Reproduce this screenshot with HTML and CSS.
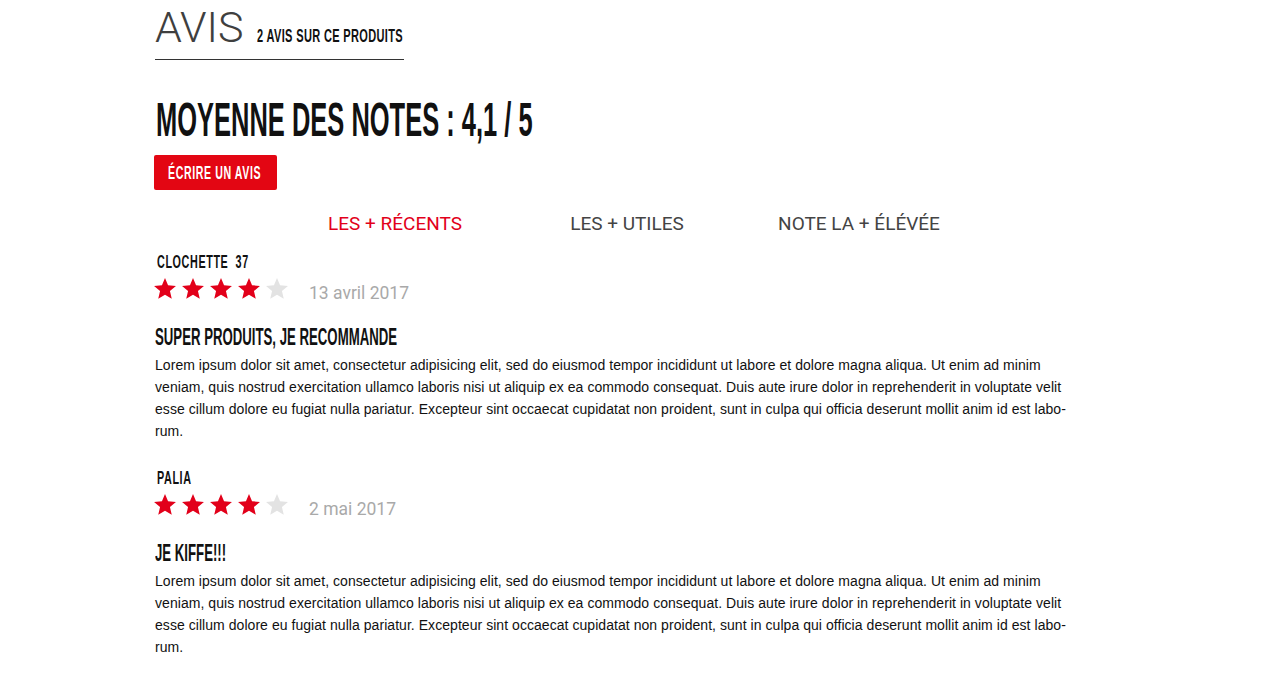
FILE: index.html
```html
<!DOCTYPE html>
<html lang="fr">
<head>
<meta charset="utf-8">
<title>Avis</title>
<link rel="stylesheet" href="styles.css">
</head>
<body>
<div class="page">
  <header class="reviews-head">
    <h1 class="reviews-title">AVIS</h1>
    <span class="reviews-count"><span class="cond">2 AVIS SUR CE PRODUITS</span></span>
  </header>

  <h2 class="average">MOYENNE DES NOTES : 4,1 / 5</h2>

  <button class="write-btn" type="button"><span class="cond">ÉCRIRE UN AVIS</span></button>

  <nav class="sort-tabs">
    <a class="tab active">LES + RÉCENTS</a>
    <a class="tab">LES + UTILES</a>
    <a class="tab">NOTE LA + ÉLÉVÉE</a>
  </nav>

  <article class="review">
    <div class="author">CLOCHETTE&nbsp; 37</div>
    <div class="rating-row">
      <span class="stars">
        <svg class="star on" viewBox="1 0.5 22 21"><polygon points="12,0.5 15.06,7.79 22.94,8.45 16.95,13.61 18.76,21.3 12,17.2 5.24,21.3 7.05,13.61 1.06,8.45 8.94,7.79"/></svg>
        <svg class="star on" viewBox="1 0.5 22 21"><polygon points="12,0.5 15.06,7.79 22.94,8.45 16.95,13.61 18.76,21.3 12,17.2 5.24,21.3 7.05,13.61 1.06,8.45 8.94,7.79"/></svg>
        <svg class="star on" viewBox="1 0.5 22 21"><polygon points="12,0.5 15.06,7.79 22.94,8.45 16.95,13.61 18.76,21.3 12,17.2 5.24,21.3 7.05,13.61 1.06,8.45 8.94,7.79"/></svg>
        <svg class="star on" viewBox="1 0.5 22 21"><polygon points="12,0.5 15.06,7.79 22.94,8.45 16.95,13.61 18.76,21.3 12,17.2 5.24,21.3 7.05,13.61 1.06,8.45 8.94,7.79"/></svg>
        <svg class="star off" viewBox="1 0.5 22 21"><polygon points="12,0.5 15.06,7.79 22.94,8.45 16.95,13.61 18.76,21.3 12,17.2 5.24,21.3 7.05,13.61 1.06,8.45 8.94,7.79"/></svg>
      </span>
      <span class="date">13 avril 2017</span>
    </div>
    <h3 class="review-title">SUPER PRODUITS, JE RECOMMANDE</h3>
    <p class="review-text">Lorem ipsum dolor sit amet, consectetur adipisicing elit, sed do eiusmod tempor incididunt ut labore et dolore magna aliqua. Ut enim ad minim<br>veniam, quis nostrud exercitation ullamco laboris nisi ut aliquip ex ea commodo consequat. Duis aute irure dolor in reprehenderit in voluptate velit<br>esse cillum dolore eu fugiat nulla pariatur. Excepteur sint occaecat cupidatat non proident, sunt in culpa qui officia deserunt mollit anim id est labo-<br>rum.</p>
  </article>

  <article class="review">
    <div class="author">PALIA</div>
    <div class="rating-row">
      <span class="stars">
        <svg class="star on" viewBox="1 0.5 22 21"><polygon points="12,0.5 15.06,7.79 22.94,8.45 16.95,13.61 18.76,21.3 12,17.2 5.24,21.3 7.05,13.61 1.06,8.45 8.94,7.79"/></svg>
        <svg class="star on" viewBox="1 0.5 22 21"><polygon points="12,0.5 15.06,7.79 22.94,8.45 16.95,13.61 18.76,21.3 12,17.2 5.24,21.3 7.05,13.61 1.06,8.45 8.94,7.79"/></svg>
        <svg class="star on" viewBox="1 0.5 22 21"><polygon points="12,0.5 15.06,7.79 22.94,8.45 16.95,13.61 18.76,21.3 12,17.2 5.24,21.3 7.05,13.61 1.06,8.45 8.94,7.79"/></svg>
        <svg class="star on" viewBox="1 0.5 22 21"><polygon points="12,0.5 15.06,7.79 22.94,8.45 16.95,13.61 18.76,21.3 12,17.2 5.24,21.3 7.05,13.61 1.06,8.45 8.94,7.79"/></svg>
        <svg class="star off" viewBox="1 0.5 22 21"><polygon points="12,0.5 15.06,7.79 22.94,8.45 16.95,13.61 18.76,21.3 12,17.2 5.24,21.3 7.05,13.61 1.06,8.45 8.94,7.79"/></svg>
      </span>
      <span class="date">2 mai 2017</span>
    </div>
    <h3 class="review-title">JE KIFFE!!!</h3>
    <p class="review-text">Lorem ipsum dolor sit amet, consectetur adipisicing elit, sed do eiusmod tempor incididunt ut labore et dolore magna aliqua. Ut enim ad minim<br>veniam, quis nostrud exercitation ullamco laboris nisi ut aliquip ex ea commodo consequat. Duis aute irure dolor in reprehenderit in voluptate velit<br>esse cillum dolore eu fugiat nulla pariatur. Excepteur sint occaecat cupidatat non proident, sunt in culpa qui officia deserunt mollit anim id est labo-<br>rum.</p>
  </article>
</div>
</body>
</html>
```

FILE: styles.css
```css
* { box-sizing: border-box; }

html, body {
  margin: 0;
  padding: 0;
  background: #ffffff;
}

body {
  font-family: "Liberation Sans", Arial, sans-serif;
  color: #111111;
  overflow: hidden;
}

.page {
  width: 968px;
  margin: 0 auto;
}

/* condensed-face simulation */
.cond {
  display: inline-block;
  white-space: nowrap;
  transform-origin: 0 50%;
}

/* header */
.reviews-head {
  display: flex;
  align-items: baseline;
  width: fit-content;
  margin-top: 5px;
  padding-bottom: 10px;
  border-bottom: 1px solid #333333;
}

.reviews-title {
  margin: 0;
  font-family: Roboto, "Liberation Sans", sans-serif;
  font-weight: 300;
  font-size: 43px;
  line-height: 44px;
  color: #3f3f3f;
}

.reviews-count {
  width: 147px;
  margin-left: 13px;
  font-weight: 700;
  font-size: 19px;
  line-height: 20px;
  color: #111111;
  white-space: nowrap;
}

.reviews-count .cond {
  letter-spacing: 0.6px;
  transform: scaleX(0.58);
}

/* average */
.average {
  margin: 34px 0 0 1px;
  font-weight: 700;
  font-size: 49px;
  line-height: 50px;
  color: #111111;
  white-space: nowrap;
  transform: scaleX(0.52);
  transform-origin: 0 50%;
}

/* write button */
.write-btn {
  display: block;
  width: 123px;
  height: 35px;
  margin-top: 11px;
  margin-left: -1px;
  padding: 0 0 0 14px;
  border: none;
  border-radius: 2px;
  background: #e30613;
  color: #ffffff;
  font-family: "Liberation Sans", Arial, sans-serif;
  font-weight: 700;
  font-size: 18px;
  line-height: 37px;
  text-align: left;
  overflow: visible;
}

.write-btn .cond {
  letter-spacing: 1px;
  transform: scaleX(0.59);
}

/* tabs */
.sort-tabs {
  display: flex;
  margin-top: 22px;
  padding-left: 124px;
}

.tab {
  width: 232px;
  text-align: center;
  font-family: Roboto, "Liberation Sans", sans-serif;
  font-weight: 400;
  font-size: 19px;
  line-height: 24px;
  color: #444444;
  white-space: nowrap;
}

.tab.active {
  color: #e2001a;
}

/* reviews */
.review + .review {
  margin-top: 26px;
}

.author {
  margin: 16px 0 0 2px;
  font-weight: 700;
  font-size: 18px;
  line-height: 20px;
  letter-spacing: 1px;
  color: #111111;
  white-space: nowrap;
  transform: scaleX(0.6);
  transform-origin: 0 50%;
}

.review + .review .author {
  margin-top: 0;
}

.rating-row {
  display: flex;
  align-items: baseline;
  margin-top: 6px;
  margin-left: -1px;
}

.stars {
  display: flex;
  gap: 6px;
}

.star {
  display: block;
  width: 22px;
  height: 21px;
}

.star.on { fill: #e2001a; }
.star.off { fill: #e3e3e3; }

.date {
  margin-left: 21px;
  font-family: Roboto, "Liberation Sans", sans-serif;
  font-weight: 400;
  font-size: 17.5px;
  line-height: 18px;
  color: #a9a9a9;
}

.review-title {
  margin: 22px 0 0;
  font-weight: 700;
  font-size: 24px;
  line-height: 26px;
  color: #111111;
  white-space: nowrap;
  transform: scaleX(0.55);
  transform-origin: 0 50%;
}

.review-text {
  margin: 4px 0 0;
  font-size: 14px;
  line-height: 22px;
  letter-spacing: 0.05px;
  color: #111111;
}
```
